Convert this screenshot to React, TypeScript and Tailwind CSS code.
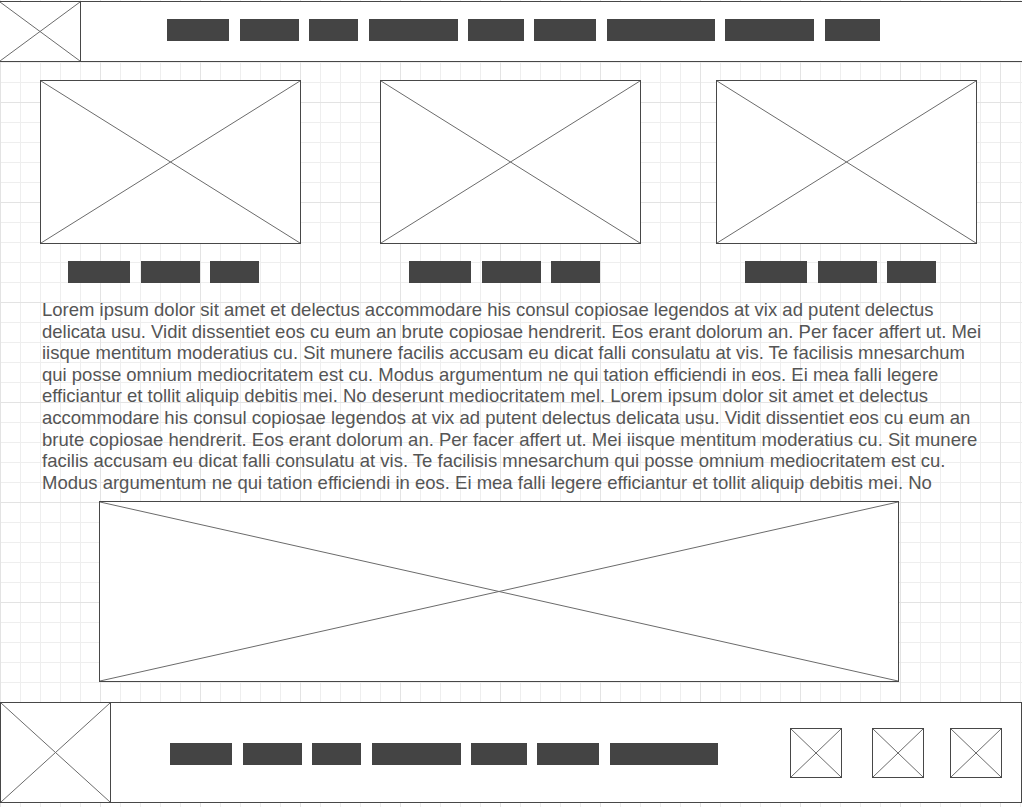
import type { ReactNode } from 'react';

// wireframe placeholder: bordered box with a cross drawn corner to corner
function Cross() {
  return (
    <svg className="absolute inset-0 w-full h-full" preserveAspectRatio="none" viewBox="0 0 100 100">
      <line x1="0" y1="0" x2="100" y2="100" stroke="#6b6b6b" strokeWidth="1" vectorEffect="non-scaling-stroke" />
      <line x1="100" y1="0" x2="0" y2="100" stroke="#6b6b6b" strokeWidth="1" vectorEffect="non-scaling-stroke" />
    </svg>
  );
}

function XBox({ className = '', children }: { className?: string; children?: ReactNode }) {
  return (
    <div className={`relative shrink-0 bg-white border border-[#474747] ${className}`}>
      <Cross />
      {children}
    </div>
  );
}

const navBars = [
  'w-[62px]',
  'ml-[11px] w-[59px]',
  'ml-[10px] w-[49px]',
  'ml-[11px] w-[89px]',
  'ml-[10px] w-[56px]',
  'ml-[10px] w-[62px]',
  'ml-[11px] w-[108px]',
  'ml-[10px] w-[89px]',
  'ml-[11px] w-[55px]',
];

const cardBars = ['w-[62px]', 'ml-[11px] w-[59px]', 'ml-[10px] w-[49px]'];

const cards = [
  { m: 'ml-[40px]', p: 'pl-[28px]' },
  { m: 'ml-[79px]', p: 'pl-[29px]' },
  { m: 'ml-[75px]', p: 'pl-[29px]' },
];

const lorem =
  'Lorem ipsum dolor sit amet et delectus accommodare his consul copiosae legendos at vix ad putent delectus delicata usu. Vidit dissentiet eos cu eum an brute copiosae hendrerit. Eos erant dolorum an. Per facer affert ut. Mei iisque mentitum moderatius cu. Sit munere facilis accusam eu dicat falli consulatu at vis. Te facilisis mnesarchum qui posse omnium mediocritatem est cu. Modus argumentum ne qui tation efficiendi in eos. Ei mea falli legere efficiantur et tollit aliquip debitis mei. No deserunt mediocritatem mel.';

function Bar({ className }: { className: string }) {
  return <div className={`h-[22px] shrink-0 bg-[#444444] ${className}`} />;
}

export default function App() {
  return (
    <div
      className="w-[1022px] h-[807px] overflow-hidden pt-px flex flex-col bg-white bg-[linear-gradient(to_right,#e3e3e3_1px,transparent_1px),linear-gradient(to_bottom,#e3e3e3_1px,transparent_1px),linear-gradient(to_right,#eeeeee_1px,transparent_1px),linear-gradient(to_bottom,#eeeeee_1px,transparent_1px)] bg-[size:100px_100px,100px_100px,20px_20px,20px_20px] bg-[position:0_2px] font-['Liberation_Sans',Arial,sans-serif]"
    >
      {/* header */}
      <header className="h-[61px] w-[1023px] shrink-0 flex items-start bg-white border-y border-[#474747]">
        <div className="relative self-stretch w-[81px] shrink-0 border-r border-[#474747]">
          <Cross />
        </div>
        <nav className="ml-[86px] mt-[17px] flex">
          {navBars.map((c, i) => (
            <Bar key={i} className={c} />
          ))}
        </nav>
      </header>

      {/* image cards */}
      <div className="mt-[18px] flex">
        {cards.map((card, i) => (
          <div key={i} className={`flex flex-col ${card.m}`}>
            <XBox className="w-[261px] h-[164px]" />
            <div className={`mt-[17px] flex ${card.p}`}>
              {cardBars.map((c, j) => (
                <Bar key={j} className={c} />
              ))}
            </div>
          </div>
        ))}
      </div>

      {/* body copy */}
      <p className="mt-[16px] ml-[42px] w-[940px] h-[194px] shrink-0 overflow-hidden text-[18.5px] leading-[21.6px] text-[#555555]">
        {lorem} {lorem}
      </p>

      {/* banner image */}
      <XBox className="mt-[8px] ml-[99px] w-[800px] h-[181px]" />

      {/* footer */}
      <footer className="mt-[20px] w-[1022px] h-[101px] shrink-0 flex bg-white border border-[#474747] border-l-0">
        <div className="relative self-stretch w-[111px] shrink-0 border-x border-[#474747]">
          <Cross />
        </div>
        <nav className="ml-[59px] mt-[40px] flex self-start">
          {navBars.slice(0, 7).map((c, i) => (
            <Bar key={i} className={c} />
          ))}
        </nav>
        <div className="ml-auto mr-[19px] flex items-center">
          <XBox className="w-[52px] h-[50px]" />
          <XBox className="ml-[30px] w-[52px] h-[50px]" />
          <XBox className="ml-[26px] w-[52px] h-[50px]" />
        </div>
      </footer>
    </div>
  );
}
